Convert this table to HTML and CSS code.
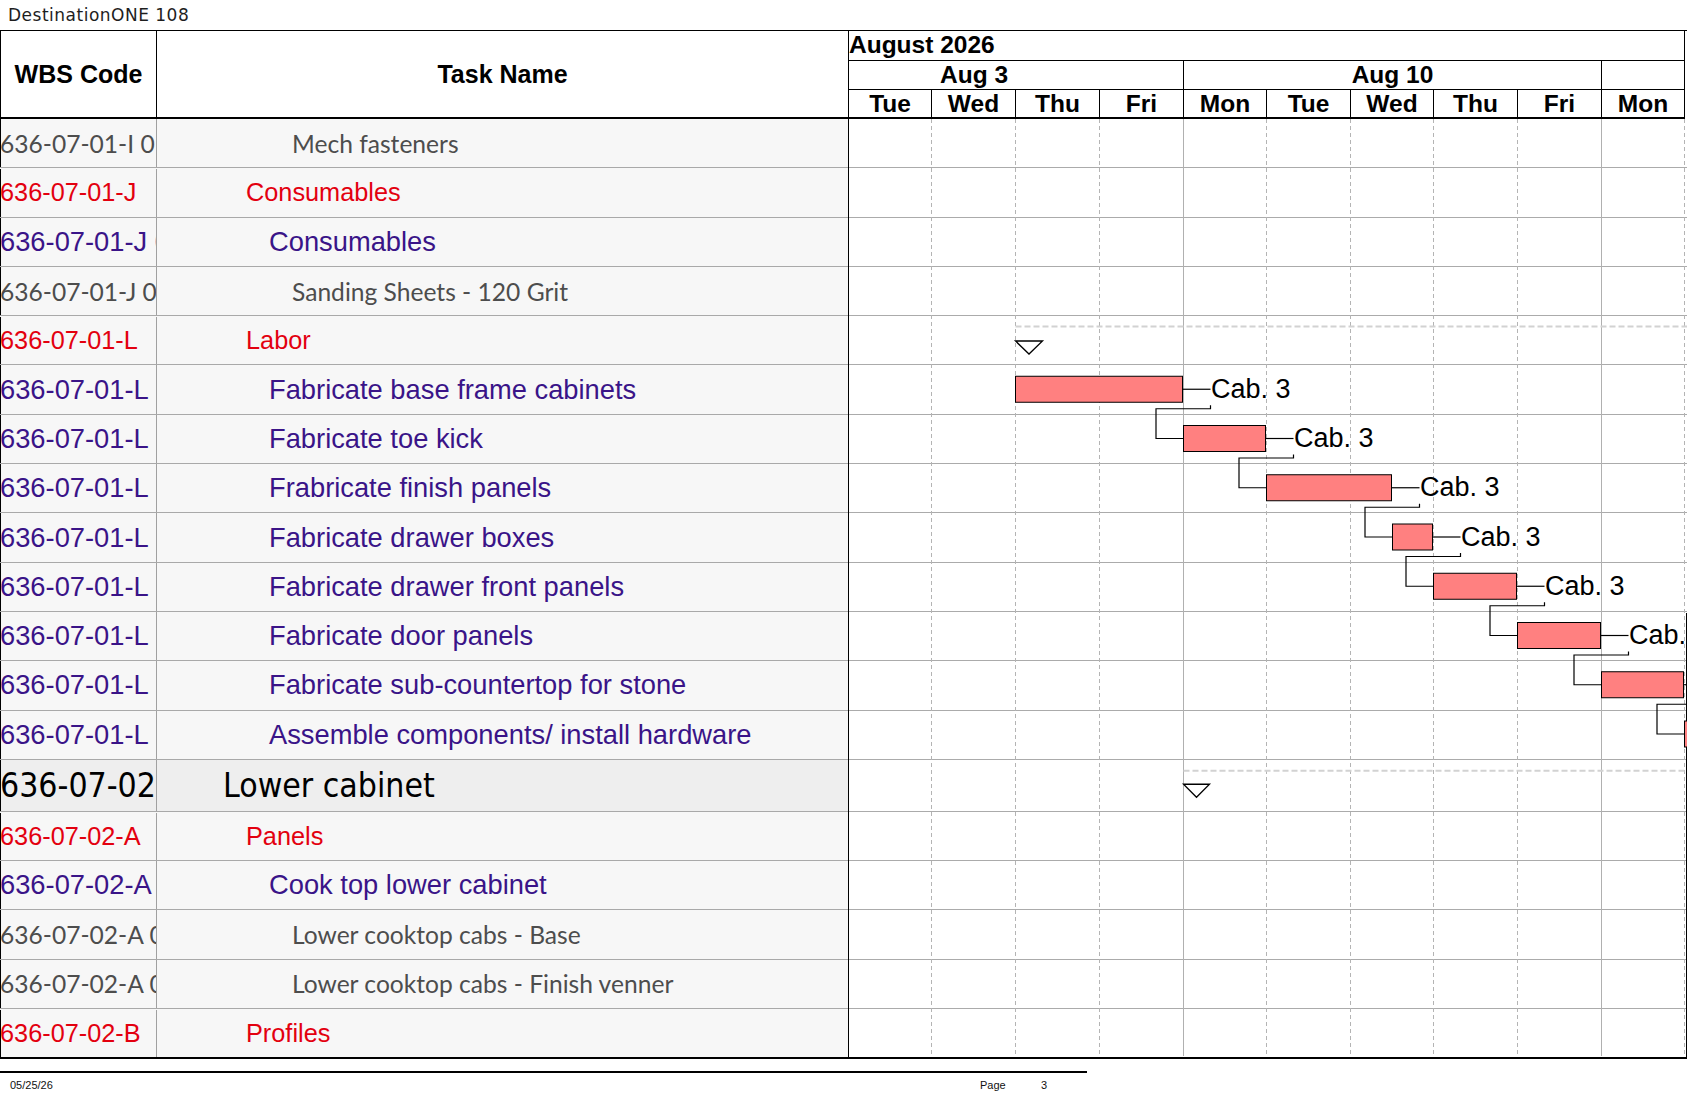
FILE: index.html
```html
<!DOCTYPE html>
<html>
<head>
<meta charset="utf-8">
<title>DestinationONE 108</title>
<link rel="stylesheet" href="styles.css">
</head>
<body>
<div class="title">DestinationONE 108</div>
<div class="sheet">
  <div class="table">
    <div class="thead">
      <div class="th th-wbs">WBS Code</div>
      <div class="th th-task">Task Name</div>
    </div>
    <div class="tbody">
      <div class="row gray"><div class="wbs">636-07-01-I 01</div><div class="task">Mech fasteners</div></div>
      <div class="row red"><div class="wbs">636-07-01-J</div><div class="task">Consumables</div></div>
      <div class="row blue"><div class="wbs">636-07-01-J 01</div><div class="task">Consumables</div></div>
      <div class="row gray"><div class="wbs">636-07-01-J 01</div><div class="task">Sanding Sheets - 120 Grit</div></div>
      <div class="row red"><div class="wbs">636-07-01-L</div><div class="task">Labor</div></div>
      <div class="row blue"><div class="wbs">636-07-01-L</div><div class="task">Fabricate base frame cabinets</div></div>
      <div class="row blue"><div class="wbs">636-07-01-L</div><div class="task">Fabricate toe kick</div></div>
      <div class="row blue"><div class="wbs">636-07-01-L</div><div class="task">Frabricate finish panels</div></div>
      <div class="row blue"><div class="wbs">636-07-01-L</div><div class="task">Fabricate drawer boxes</div></div>
      <div class="row blue"><div class="wbs">636-07-01-L</div><div class="task">Fabricate drawer front panels</div></div>
      <div class="row blue"><div class="wbs">636-07-01-L</div><div class="task">Fabricate door panels</div></div>
      <div class="row blue"><div class="wbs">636-07-01-L</div><div class="task">Fabricate sub-countertop for stone</div></div>
      <div class="row blue"><div class="wbs">636-07-01-L</div><div class="task">Assemble components/ install hardware</div></div>
      <div class="row top"><div class="wbs">636-07-02</div><div class="task">Lower cabinet</div></div>
      <div class="row red"><div class="wbs">636-07-02-A</div><div class="task">Panels</div></div>
      <div class="row blue"><div class="wbs">636-07-02-A</div><div class="task">Cook top lower cabinet</div></div>
      <div class="row gray"><div class="wbs">636-07-02-A 01</div><div class="task">Lower cooktop cabs - Base</div></div>
      <div class="row gray"><div class="wbs">636-07-02-A 02</div><div class="task">Lower cooktop cabs - Finish venner</div></div>
      <div class="row red last"><div class="wbs">636-07-02-B</div><div class="task">Profiles</div></div>
    </div>
  </div>
  <div class="gantt">
    <div class="ghead">
      <div class="g-month">August 2026</div>
      <div class="g-weeks">
        <div class="wk wk1">Aug 3</div>
        <div class="wk wk2">Aug 10</div>
        <div class="wk wk3"></div>
      </div>
      <div class="g-days">
        <div class="day">Tue</div>
        <div class="day">Wed</div>
        <div class="day">Thu</div>
        <div class="day">Fri</div>
        <div class="day">Mon</div>
        <div class="day">Tue</div>
        <div class="day">Wed</div>
        <div class="day">Thu</div>
        <div class="day">Fri</div>
        <div class="day">Mon</div>
      </div>
    </div>
    <div class="gbody">
      <div class="grow"></div>
      <div class="grow"></div>
      <div class="grow"></div>
      <div class="grow"></div>
      <div class="grow"></div>
      <div class="grow"></div>
      <div class="grow"></div>
      <div class="grow"></div>
      <div class="grow"></div>
      <div class="grow"></div>
      <div class="grow"></div>
      <div class="grow"></div>
      <div class="grow"></div>
      <div class="grow top"></div>
      <div class="grow"></div>
      <div class="grow"></div>
      <div class="grow"></div>
      <div class="grow"></div>
      <div class="grow last"></div>
      <svg class="chart" width="839" height="940" viewBox="0 0 839 940">
        <line class="dash" x1="83.5" y1="0" x2="83.5" y2="937"/>
        <line class="dash" x1="167.5" y1="0" x2="167.5" y2="937"/>
        <line class="dash" x1="251.5" y1="0" x2="251.5" y2="937"/>
        <line class="wkline" x1="335.5" y1="0" x2="335.5" y2="937"/>
        <line class="dash" x1="418.5" y1="0" x2="418.5" y2="937"/>
        <line class="dash" x1="502.5" y1="0" x2="502.5" y2="937"/>
        <line class="dash" x1="585.5" y1="0" x2="585.5" y2="937"/>
        <line class="dash" x1="669.5" y1="0" x2="669.5" y2="937"/>
        <line class="wkline" x1="753.5" y1="0" x2="753.5" y2="937"/>
        <line class="dash" x1="836.5" y1="0" x2="836.5" y2="937"/>
        <line class="edge" x1="0.5" y1="0" x2="0.5" y2="939"/>
        <line class="edge" x1="838.5" y1="494" x2="838.5" y2="939"/>

        <line class="sum" x1="167.5" y1="207.5" x2="839" y2="207.5"/>
        <line class="sum" x1="335.5" y1="651.75" x2="839" y2="651.75"/>
        <polygon class="tri" points="167.5,222 194.5,222 181,235"/>
        <polygon class="tri" points="335.5,665.25 361.5,665.25 348.5,678.25"/>

        <polyline class="link" points="334.5,270.25 362.5,270.25"/>
        <polyline class="link" points="417.5,319.5 445.5,319.5"/>
        <polyline class="link" points="543.5,368.75 571.5,368.75"/>
        <polyline class="link" points="584.5,418 612.5,418"/>
        <polyline class="link" points="668.5,467.25 696.5,467.25"/>
        <polyline class="link" points="752.5,516.5 780.5,516.5"/>
        <polyline class="link" points="835.5,565.75 863.5,565.75"/>

        <polyline class="link" points="362.5,286.25 362.5,289.75 308,289.75 308,319.5 335.5,319.5"/>
        <polyline class="link" points="445.5,335.5 445.5,339 391,339 391,368.75 418.5,368.75"/>
        <polyline class="link" points="571.5,384.75 571.5,388.25 517,388.25 517,418 544.5,418"/>
        <polyline class="link" points="612.5,434 612.5,437.5 558,437.5 558,467.25 585.5,467.25"/>
        <polyline class="link" points="696.5,483.25 696.5,486.75 642,486.75 642,516.5 669.5,516.5"/>
        <polyline class="link" points="780.5,532.5 780.5,536 726,536 726,565.75 753.5,565.75"/>
        <polyline class="link" points="863.5,581.75 863.5,585.25 809,585.25 809,615 836.5,615"/>

        <rect class="bar" x="167.5" y="257.25" width="167" height="26"/>
        <rect class="bar" x="335.5" y="306.5" width="82" height="26"/>
        <rect class="bar" x="418.5" y="355.75" width="125" height="26"/>
        <rect class="bar" x="544.5" y="405" width="40" height="26"/>
        <rect class="bar" x="585.5" y="454.25" width="83" height="26"/>
        <rect class="bar" x="669.5" y="503.5" width="83" height="26"/>
        <rect class="bar" x="753.5" y="552.75" width="82" height="26"/>
        <rect class="bar" x="836.5" y="602" width="83" height="26"/>

        <text class="lbl" x="363" y="278.75">Cab. 3</text>
        <text class="lbl" x="446" y="328">Cab. 3</text>
        <text class="lbl" x="572" y="377.25">Cab. 3</text>
        <text class="lbl" x="613" y="426.5">Cab. 3</text>
        <text class="lbl" x="697" y="475.75">Cab. 3</text>
        <text class="lbl" x="781" y="525">Cab. 3</text>
      </svg>
    </div>
  </div>
</div>
<div class="footer">
  <div class="f-date">05/25/26</div>
  <div class="f-page">Page</div>
  <div class="f-num">3</div>
</div>
</body>
</html>
```

FILE: styles.css
```css
* {
  box-sizing: border-box;
}

html,
body {
  margin: 0;
  padding: 0;
  overflow: hidden;
  background: #ffffff;
}

body {
  width: 1687px;
  height: 1097px;
  font-family: "Liberation Sans", Arial, sans-serif;
  color: #000000;
}

.title {
  height: 30px;
  padding-left: 8px;
  font-family: "DejaVu Sans", sans-serif;
  font-size: 17px;
  letter-spacing: 0.5px;
  line-height: 30px;
  color: #1e1e1e;
  white-space: nowrap;
}

.sheet {
  display: flex;
  width: 1687px;
  border-top: 1px solid #000000;
}

/* ---------- left table ---------- */
.table {
  width: 848px;
  flex: none;
}

.thead {
  display: grid;
  grid-template-columns: 157px 691px;
  height: 88px;
  border-bottom: 2px solid #000000;
}

.th {
  display: flex;
  align-items: center;
  justify-content: center;
  font-weight: bold;
  font-size: 25px;
  line-height: 1;
}

.th-wbs {
  border-left: 1px solid #000000;
  border-right: 1px solid #000000;
}

.row {
  display: grid;
  grid-template-columns: 157px 691px;
  height: 49.3px;
  border-bottom: 1px solid #a9a9a9;
  background: #f7f7f7;
  white-space: nowrap;
}

.row.top {
  height: 52px;
  background: #eeeeee;
  color: #000000;
  font-family: "DejaVu Sans Condensed", "DejaVu Sans", sans-serif;
  font-stretch: condensed;
  font-size: 33.5px;
}

.row.last {
  height: 50.3px;
  border-bottom: 2px solid #000000;
}

.wbs,
.task {
  display: flex;
  align-items: center;
  overflow: hidden;
}

.wbs {
  border-left: 1px solid #000000;
  border-right: 1px solid #a0a0a0;
  text-indent: -1px;
}

.row.red {
  color: #e3000f;
  font-size: 25.3px;
  padding-top: 1px;
}

.row.blue {
  color: #3a1488;
  font-size: 27.3px;
}

.row.gray {
  color: #4d4d4d;
  font-family: Lato, "Liberation Sans", sans-serif;
  font-size: 24.6px;
}

.row.top .task {
  padding-left: 66px;
}

.row.red .task {
  padding-left: 89px;
}

.row.blue .task {
  padding-left: 112px;
}

.row.gray .task {
  padding-left: 135px;
}

/* ---------- gantt ---------- */
.gantt {
  width: 839px;
  flex: none;
  overflow: hidden;
}

.ghead {
  width: 837px;
  height: 88px;
  font-weight: bold;
  font-size: 24.5px;
  line-height: 1;
}

.g-month {
  height: 30px;
  display: flex;
  align-items: center;
  border-left: 1px solid #000000;
  border-right: 1px solid #000000;
  border-bottom: 1px solid #000000;
}

.g-weeks {
  display: grid;
  grid-template-columns: 335px 418px 83px;
  height: 29px;
  border-right: 1px solid #000000;
  border-bottom: 1px solid #000000;
}

.wk {
  display: flex;
  align-items: center;
  justify-content: center;
  border-left: 1px solid #000000;
}

.wk1 {
  padding-right: 84px;
}

.g-days {
  display: grid;
  grid-template-columns: 83px 84px 84px 84px 83px 84px 83px 84px 84px 83px;
  height: 29px;
  border-right: 1px solid #000000;
  border-bottom: 2px solid #000000;
}

.day {
  display: flex;
  align-items: center;
  justify-content: center;
  padding-top: 1px;
  border-left: 1px solid #000000;
}

.gbody {
  position: relative;
  width: 839px;
}

.grow {
  height: 49.3px;
  border-bottom: 1px solid #ababab;
  background: #ffffff;
}

.grow.top {
  height: 52px;
}

.grow.last {
  height: 50.3px;
  border-bottom: 2px solid #000000;
}

.chart {
  position: absolute;
  left: 0;
  top: 0;
  display: block;
  overflow: visible;
}

.dash {
  stroke: #b4b4b4;
  stroke-width: 1;
  stroke-dasharray: 4 3;
}

.wkline {
  stroke: #b0b0b0;
  stroke-width: 1;
}

.edge {
  stroke: #000000;
  stroke-width: 1;
}

.sum {
  stroke: #d2d2d2;
  stroke-width: 2;
  stroke-dasharray: 6 3;
}

.tri {
  fill: #ffffff;
  stroke: #000000;
  stroke-width: 1.3;
}

.link {
  fill: none;
  stroke: #000000;
  stroke-width: 1.2;
}

.bar {
  fill: #ff8080;
  stroke: #000000;
  stroke-width: 1;
}

.lbl {
  font-family: "Liberation Sans", Arial, sans-serif;
  font-size: 27px;
  fill: #000000;
}

/* ---------- footer ---------- */
.footer {
  display: flex;
  width: 1087px;
  margin-top: 12px;
  border-top: 2px solid #000000;
  padding-top: 6px;
  font-family: "Liberation Sans", Arial, sans-serif;
  font-size: 11px;
  line-height: 13px;
  color: #111111;
}

.f-date {
  width: 980px;
  padding-left: 10px;
}

.f-page {
  width: 61px;
}
```
